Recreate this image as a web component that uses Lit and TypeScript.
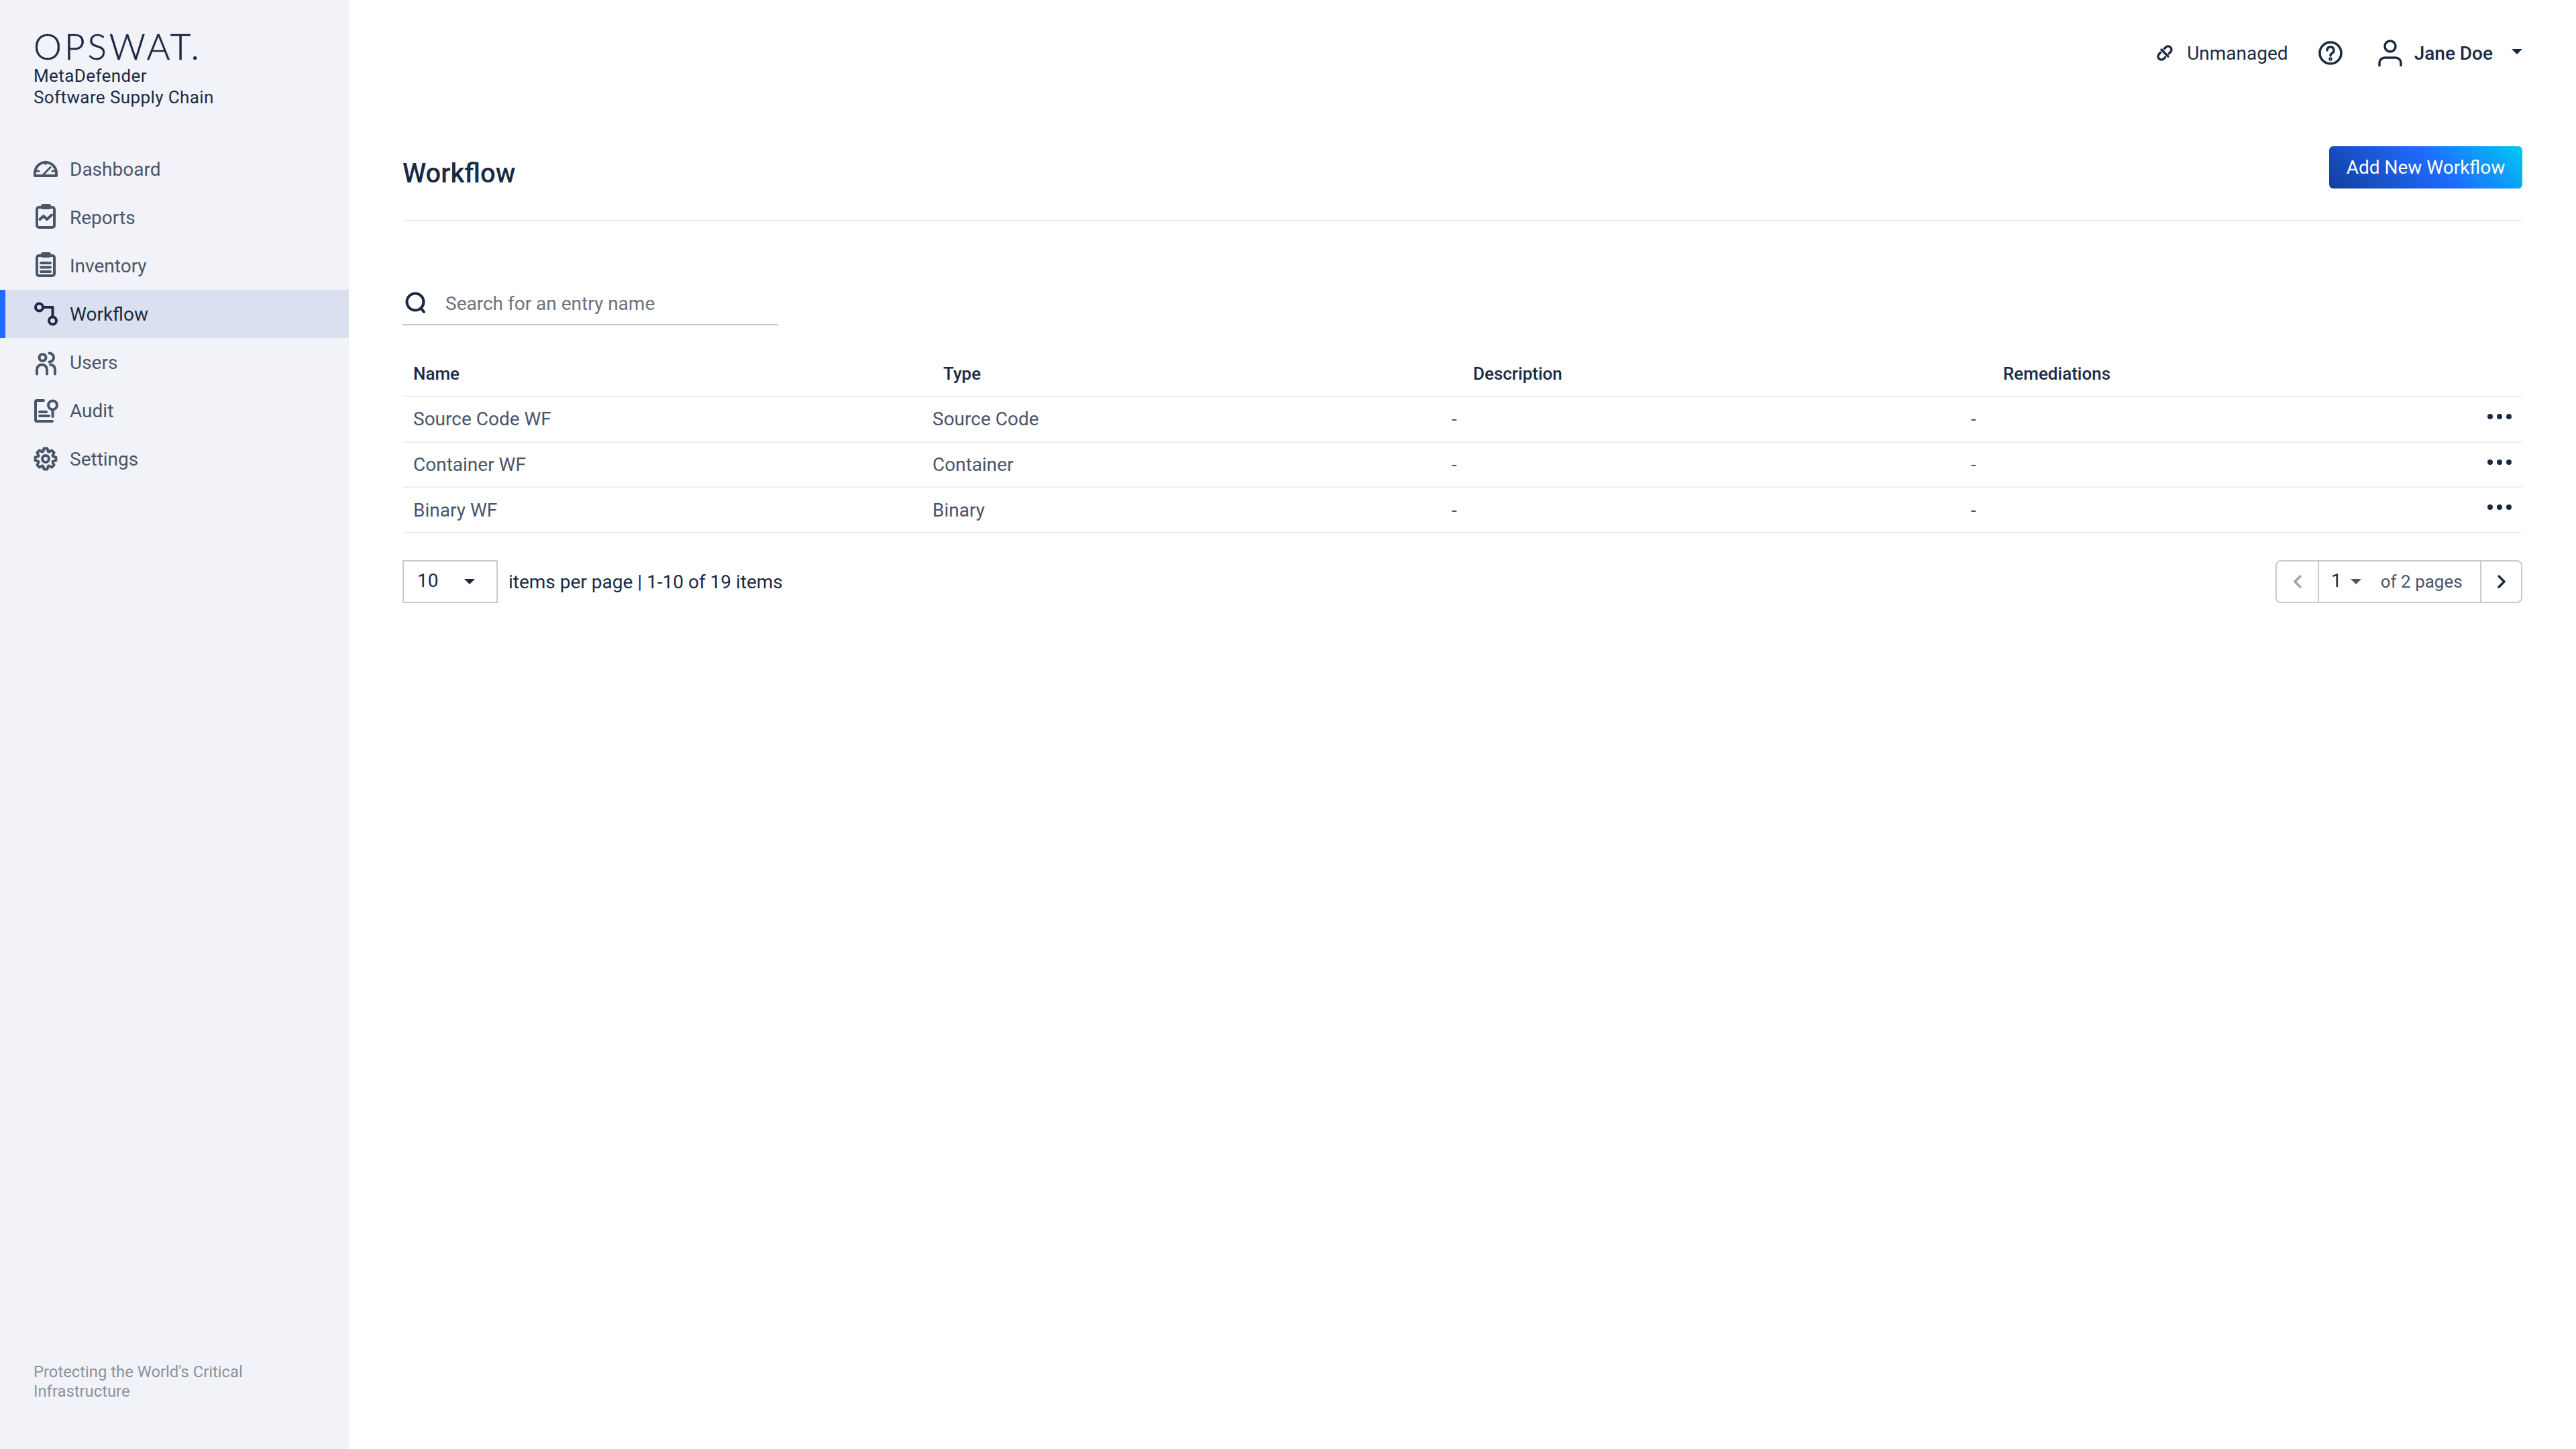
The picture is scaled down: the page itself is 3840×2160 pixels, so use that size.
import { LitElement, html, css, svg } from "lit";
import { customElement } from "lit/decorators.js";

function gearPath(): string {
  const cx = 18, cy = 18, n = 8, ro = 15.6, ri = 11.6;
  let d = "";
  for (let i = 0; i < n; i++) {
    const a = (i * 360) / n - 90;
    const pts: [number, number][] = [
      [ri, a - 19],
      [ro, a - 9],
      [ro, a + 9],
      [ri, a + 19],
    ];
    pts.forEach(([r, deg], j) => {
      const t = (deg * Math.PI) / 180;
      const x = (cx + r * Math.cos(t)).toFixed(2);
      const y = (cy + r * Math.sin(t)).toFixed(2);
      d += i === 0 && j === 0 ? `M${x} ${y}` : `L${x} ${y}`;
    });
  }
  return d + "Z";
}

const clip = svg`<rect x="5" y="3" width="26" height="30" rx="3"/><rect x="11" y="-2" width="15" height="8" rx="3" fill="currentColor" stroke="none"/>`;

const NAV_ICONS: Record<string, unknown> = {
  Dashboard: svg`<path d="M2 28V24A16 16 0 0 1 34 24V28Z"/><path stroke-width="3" d="M18 7V10.5M4.5 21H8M28 21H31.5M13 28L25 15.5"/>`,
  Reports: svg`${clip}<path d="M9.5 21L15 16L20 21L27 14.5"/>`,
  Inventory: svg`${clip}<path d="M11 14H25M11 20.5H25M11 27H25"/>`,
  Workflow: svg`<circle cx="8.5" cy="8" r="5.5"/><path d="M14 8H28.5V21"/><circle cx="28.5" cy="28" r="5.5"/>`,
  Users: svg`<circle cx="13.5" cy="11" r="5"/><path d="M23.5 4.5a6.5 6.5 0 0 1 0 13M5 35.5V29a7.5 7.5 0 0 1 15 0V35.5M25 21.5a7 7 0 0 1 7 7V35.5"/>`,
  Audit: svg`<path d="M15 3H5A2 2 0 0 0 3 5V32A2 2 0 0 0 5 34H28"/><circle cx="28.5" cy="10" r="6.5"/><path d="M28.5 17V27M9 20H19M9 26H23"/>`,
  Settings: svg`<path d=${gearPath()}/><circle cx="18" cy="18" r="5"/>`,
};

const NAV = ["Dashboard", "Reports", "Inventory", "Workflow", "Users", "Audit", "Settings"];
const ROWS = [
  ["Source Code WF", "Source Code"],
  ["Container WF", "Container"],
  ["Binary WF", "Binary"],
];

@customElement("app-root")
export class AppRoot extends LitElement {
  static styles = css`
    :host {
      display: grid;
      grid-template-columns: 520px 1fr;
      width: 3840px;
      height: 2160px;
      background: #fff;
      font-family: Roboto, "Liberation Sans", sans-serif;
      font-size: 28px;
      color: #1b2a44;
    }
    svg { display: block; overflow: visible; fill: none; stroke: currentColor; flex: none; }
    .side { background: #f1f3f9; display: flex; flex-direction: column; }
    .brand { padding: 41px 0 0 50px; height: 216px; box-sizing: border-box; }
    .logo { font-family: Lato, sans-serif; font-weight: 300; font-size: 53px; line-height: 56px; letter-spacing: 4px; -webkit-text-stroke: 0.6px #1b2a44; }
    .product { font-size: 26px; line-height: 32px; letter-spacing: 0.4px; }
    .item { height: 72px; display: flex; align-items: center; gap: 18px; padding-left: 50px; color: #4a5568; }
    .item svg { width: 36px; height: 36px; stroke-width: 4; stroke-linecap: round; stroke-linejoin: round; }
    .item.on { background: #dbe0f0; color: #1b2a44; box-shadow: inset 8px 0 0 #1d6bff; }
    .tag { margin-top: auto; padding: 0 50px 71px 50px; font-size: 23.8px; line-height: 29px; color: #8e929c; }
    .main { padding: 0 80px; min-width: 0; }
    .top { height: 158px; display: flex; align-items: center; justify-content: flex-end; }
    .un { display: flex; align-items: center; gap: 19px; font-size: 28px; }
    .un svg { width: 28px; height: 28px; stroke-width: 3.5; stroke-linecap: round; }
    .help { margin-left: 45px; width: 36px; height: 36px; stroke-width: 3.5; }
    .user { margin-left: 53px; width: 36px; height: 42px; stroke-width: 3.5; }
    .name { margin-left: 18px; font-weight: 500; }
    .caret { width: 0; height: 0; border-left: 8px solid transparent; border-right: 8px solid transparent; border-top: 8px solid #1b2a44; }
    .top .caret { margin-left: 28px; margin-top: -4px; }
    .head { height: 172px; box-sizing: border-box; padding-top: 60px; border-bottom: 2px solid #eceef0; display: flex; justify-content: space-between; align-items: flex-start; }
    h1 { margin: 12px 0 0; font-size: 40px; line-height: 58px; font-weight: 500; }
    .add { height: 63px; width: 288px; border: none; border-radius: 6px; color: #fff; font: 400 28px Roboto, sans-serif; padding: 0; background: linear-gradient(45deg, #123f9c 0%, #1f6bff 55%, #00c9f2 100%); }
    .search { margin-top: 94px; width: 560px; height: 61px; box-sizing: border-box; border-bottom: 2px solid #c8cad0; display: flex; align-items: center; gap: 28px; padding: 0 0 3px 4px; color: #6b7280; }
    .search svg { width: 32px; height: 32px; color: #1b2a44; stroke-width: 4; stroke-linecap: round; }
    .thead, .row { display: grid; padding-left: 16px; box-sizing: border-box; border-bottom: 2px solid #eceef0; position: relative; }
    .thead { margin-top: 37px; height: 70px; padding-top: 2px; grid-template-columns: 790px 790px 790px 1fr; align-items: center; font-weight: 500; font-size: 26px; }
    .row { height: 67.67px; grid-template-columns: 774px 774px 774px 1fr; align-items: center; color: #4a5568; }
    .more { position: absolute; right: 16px; top: 25px; display: flex; gap: 6px; }
    .more i { width: 8px; height: 8px; border-radius: 50%; background: #1b2a44; }
    .foot { margin-top: 40px; display: flex; align-items: center; justify-content: space-between; }
    .left { display: flex; align-items: center; gap: 16px; }
    .left > span { margin-top: 1px; }
    .sel { width: 142px; height: 64px; box-sizing: border-box; border: 2px solid #c8cad0; display: flex; align-items: center; justify-content: space-between; padding: 0 32px 0 20px; }
    .sel span { margin-top: -2px; }
    .pager { display: flex; height: 64px; width: 368px; box-sizing: border-box; border: 2px solid #c8cad0; border-radius: 8px; }
    .pg { width: 61px; display: flex; align-items: center; justify-content: center; flex: none; }
    .pg:last-child { width: 59px; }
    .pg svg { width: 12px; height: 20px; stroke-width: 3.5; stroke-linecap: round; stroke-linejoin: round; }
    .pg.off { color: #9ea3ab; }
    .mid { flex: 1; border-left: 2px solid #c8cad0; border-right: 2px solid #c8cad0; display: flex; align-items: center; padding-left: 18px; color: #4a5568; font-size: 26px; }
    .mid b { font-weight: 400; font-size: 28px; color: #1b2a44; margin-top: -2px; }
    .mid .caret { margin-left: 13px; border-top-color: #4a5568; }
    .mid em { font-style: normal; margin-left: 29px; }
  `;

  render() {
    return html`
      <aside class="side">
        <div class="brand">
          <div class="logo">OPSWAT.</div>
          <div class="product">MetaDefender<br />Software Supply Chain</div>
        </div>
        <nav>
          ${NAV.map(
            (n) => html`<div class="item ${n === "Workflow" ? "on" : ""}">
              <svg viewBox="0 0 36 36">${NAV_ICONS[n]}</svg><span>${n}</span>
            </div>`
          )}
        </nav>
        <div class="tag">Protecting the World's Critical Infrastructure</div>
      </aside>
      <main class="main">
        <header class="top">
          <div class="un">
            <svg viewBox="0 0 28 28">
              <g transform="rotate(-45 14 14) translate(1.5 0)">
                <path d="M8.5 9H5.5a5 5 0 0 0 0 10H8.5M16.5 9H19.5a5 5 0 0 1 0 10H16.5M12.5 7V21" />
              </g>
            </svg>
            <span>Unmanaged</span>
          </div>
          <svg class="help" viewBox="0 0 36 36" stroke-linecap="round">
            <circle cx="18" cy="18" r="16" />
            <path d="M13 14a5 5 0 1 1 7.5 4.3C18.8 19.3 18 20 18 22" />
            <circle cx="18" cy="27" r="1" />
          </svg>
          <svg class="user" viewBox="0 0 36 42">
            <circle cx="18" cy="11" r="8" />
            <path d="M2 41V36a8 8 0 0 1 8-8H26a8 8 0 0 1 8 8V41" />
          </svg>
          <span class="name">Jane Doe</span>
          <span class="caret"></span>
        </header>
        <section class="head">
          <h1>Workflow</h1>
          <button class="add">Add New Workflow</button>
        </section>
        <div class="search">
          <svg viewBox="0 0 32 32"><circle cx="15" cy="14" r="12.5" /><path d="M24 24L28 29" /></svg>
          <span>Search for an entry name</span>
        </div>
        <div class="thead">
          <span>Name</span><span>Type</span><span>Description</span><span>Remediations</span>
        </div>
        ${ROWS.map(
          ([a, b]) => html`<div class="row">
            <span>${a}</span><span>${b}</span><span>-</span><span>-</span>
            <div class="more"><i></i><i></i><i></i></div>
          </div>`
        )}
        <div class="foot">
          <div class="left">
            <div class="sel"><span>10</span><i class="caret"></i></div>
            <span>items per page | 1-10 of 19 items</span>
          </div>
          <div class="pager">
            <div class="pg off"><svg viewBox="0 0 12 20"><path d="M10 2L2 10L10 18" /></svg></div>
            <div class="mid"><b>1</b><i class="caret"></i><em>of 2 pages</em></div>
            <div class="pg"><svg viewBox="0 0 12 20"><path d="M2 2L10 10L2 18" /></svg></div>
          </div>
        </div>
      </main>
    `;
  }
}
